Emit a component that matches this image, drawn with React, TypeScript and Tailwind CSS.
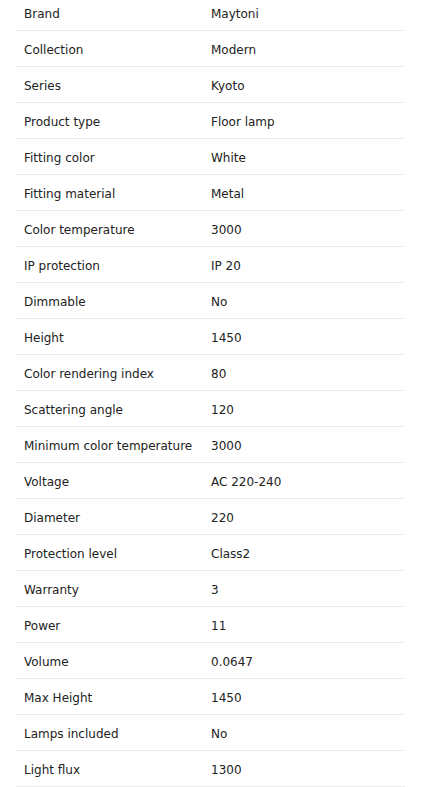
const specs: [string, string][] = [
  ['Brand', 'Maytoni'],
  ['Collection', 'Modern'],
  ['Series', 'Kyoto'],
  ['Product type', 'Floor lamp'],
  ['Fitting color', 'White'],
  ['Fitting material', 'Metal'],
  ['Color temperature', '3000'],
  ['IP protection', 'IP 20'],
  ['Dimmable', 'No'],
  ['Height', '1450'],
  ['Color rendering index', '80'],
  ['Scattering angle', '120'],
  ['Minimum color temperature', '3000'],
  ['Voltage', 'AC 220-240'],
  ['Diameter', '220'],
  ['Protection level', 'Class2'],
  ['Warranty', '3'],
  ['Power', '11'],
  ['Volume', '0.0647'],
  ['Max Height', '1450'],
  ['Lamps included', 'No'],
  ['Light flux', '1300'],
];

export default function App() {
  return (
    <div className="bg-white px-4 -mt-[6px] font-['DejaVu_Sans',sans-serif] text-[12px] text-[#222]">
      <table className="w-full border-collapse">
        <tbody>
          {specs.map(([label, value]) => (
            <tr key={label} className="border-b border-[#ececec] h-[36px]">
              <td className="w-[187px] px-2 pt-[4px] align-middle">{label}</td>
              <td className="px-2 pt-[4px] align-middle">{value}</td>
            </tr>
          ))}
        </tbody>
      </table>
    </div>
  );
}
